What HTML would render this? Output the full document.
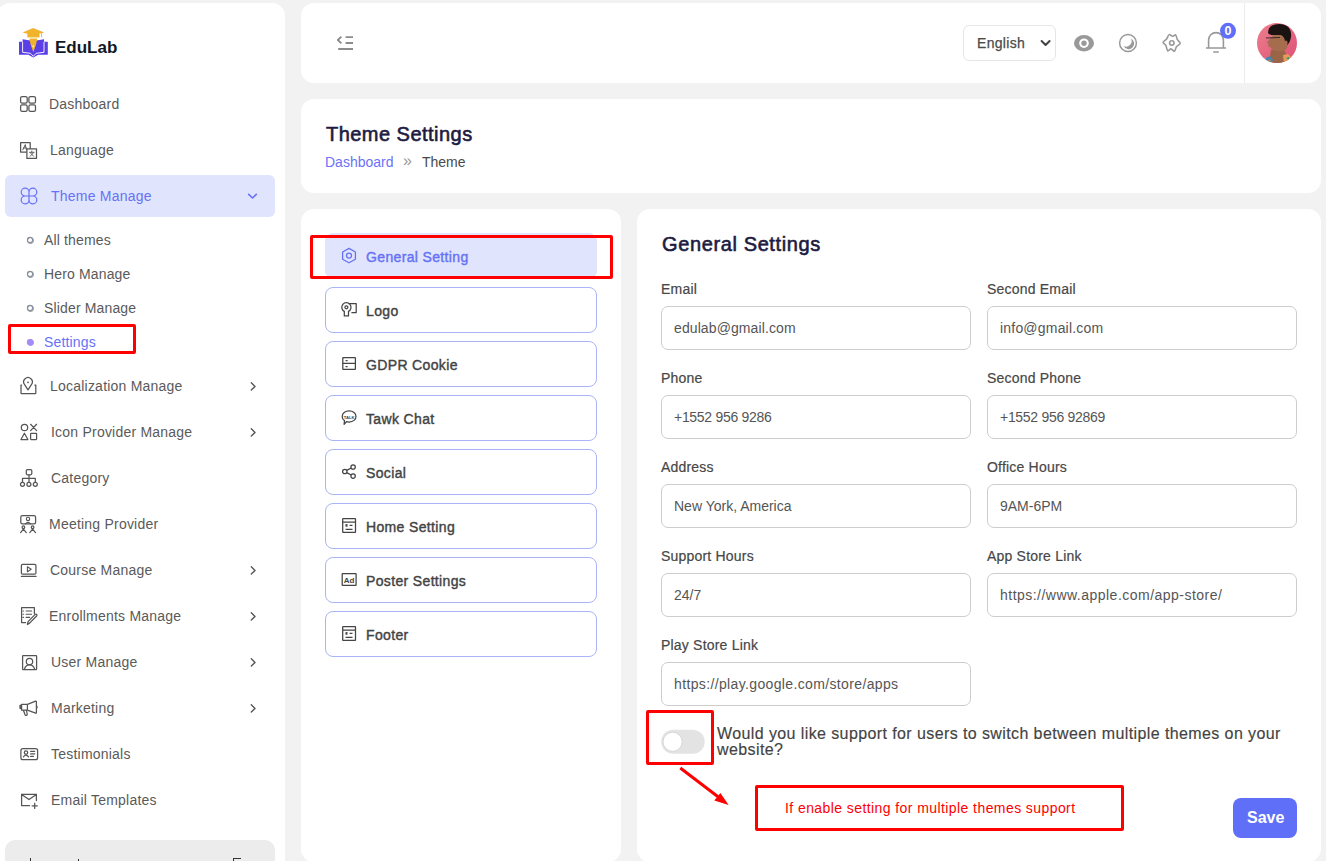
<!DOCTYPE html>
<html><head><meta charset="utf-8">
<style>
*{margin:0;padding:0;box-sizing:border-box}
html,body{width:1326px;height:861px;overflow:hidden;background:#f2f2f2;font-family:"Liberation Sans",sans-serif;color:#555}
.card{position:absolute;background:#fff;border-radius:13px}
.abs{position:absolute;white-space:nowrap}
svg{position:absolute;overflow:visible}
.nav{position:absolute;font-size:14px;line-height:20px;color:#5a5a5a;letter-spacing:0.22px;white-space:nowrap}
.chev{position:absolute;left:249px;width:7px;height:7px;border-right:1.5px solid #555;border-top:1.5px solid #555;transform:rotate(45deg)}
.sub{position:absolute;left:44px;font-size:14px;line-height:20px;color:#5a5a5a;letter-spacing:0.15px;white-space:nowrap}
.dot{position:absolute;left:27px;width:7px;height:7px;border:1.3px solid #8a8f99;border-radius:50%}
.tab{position:absolute;left:325px;width:272px;height:46px;border:1px solid #aab4f6;border-radius:8px}
.tab span{position:absolute;left:40px;top:13px;font-size:14px;line-height:20px;color:#434343;-webkit-text-stroke:0.4px currentColor;letter-spacing:0.35px;white-space:nowrap}
.lbl{position:absolute;font-size:14px;line-height:20px;color:#474747;-webkit-text-stroke:0.2px currentColor;letter-spacing:0.2px;white-space:nowrap}
.inp{position:absolute;width:310px;height:44px;border:1px solid #cdcdcd;border-radius:7px}
.inp span{position:absolute;left:12px;top:11px;font-size:14px;line-height:20px;color:#555;white-space:nowrap}
.redbox{position:absolute;border:3px solid #f00;border-radius:2px}
</style></head><body>

<!-- SIDEBAR -->
<div class="card" style="left:-3px;top:3px;width:288px;height:900px"></div>
<div class="abs" style="left:55px;top:35.5px;font-size:17px;line-height:24px;font-weight:bold;color:#111827">EduLab</div>

<div class="nav" style="left:49px;top:94px">Dashboard</div>
<div class="nav" style="left:50px;top:140px">Language</div>
<div style="position:absolute;left:5px;top:175px;width:270px;height:42px;background:#e0e4fc;border-radius:6px"></div>
<div class="nav" style="left:51px;top:186px;color:#6672f5">Theme Manage</div>
<div class="sub" style="top:230px">All themes</div><div class="dot" style="top:237px"></div>
<div class="sub" style="top:264px">Hero Manage</div><div class="dot" style="top:271px"></div>
<div class="sub" style="top:298px">Slider Manage</div><div class="dot" style="top:305px"></div>
<div class="sub" style="top:332px;color:#6672f5">Settings</div><div class="dot" style="top:339px;background:#a48cf5;border-color:#a48cf5"></div>
<div class="redbox" style="left:8px;top:324px;width:128px;height:30px"></div>
<div class="nav" style="left:50px;top:376px">Localization Manage</div>
<div class="nav" style="left:51px;top:422px">Icon Provider Manage</div>
<div class="nav" style="left:51px;top:468px">Category</div>
<div class="nav" style="left:49px;top:514px">Meeting Provider</div>
<div class="nav" style="left:50px;top:560px">Course Manage</div>
<div class="nav" style="left:49px;top:606px">Enrollments Manage</div>
<div class="nav" style="left:51px;top:652px">User Manage</div>
<div class="nav" style="left:51px;top:698px">Marketing</div>
<div class="nav" style="left:51px;top:744px">Testimonials</div>
<div class="nav" style="left:51px;top:790px">Email Templates</div>
<div style="position:absolute;left:5px;top:840px;width:270px;height:40px;background:#ececec;border-radius:10px"></div>

<div style="position:absolute;left:30px;top:857.5px;width:1.4px;height:4px;background:#333"></div>
<div style="position:absolute;left:77.6px;top:859px;width:1.4px;height:2px;background:#333"></div>
<div style="position:absolute;left:233px;top:858px;width:8px;height:1.3px;background:#333"></div>
<div style="position:absolute;left:233px;top:858px;width:1.3px;height:3px;background:#333"></div>
<!-- HEADER -->
<div class="card" style="left:301px;top:3px;width:1020px;height:80px"></div>
<div style="position:absolute;left:963px;top:25px;width:93px;height:36px;border:1px solid #e6e6e6;border-radius:6px"></div>
<div class="abs" style="left:977px;top:33px;font-size:14px;line-height:20px;color:#4a4a4a;-webkit-text-stroke:0.25px currentColor;letter-spacing:0.3px">English</div>
<div style="position:absolute;left:1244px;top:3px;width:1px;height:80px;background:#ececec"></div>

<!-- BREADCRUMB -->
<div class="card" style="left:301px;top:99px;width:1020px;height:94px"></div>
<div class="abs" style="left:326px;top:121.5px;font-size:20px;line-height:24px;color:#1d1b41;-webkit-text-stroke:0.6px currentColor;letter-spacing:0.47px">Theme Settings</div>
<div class="abs" style="left:325px;top:152px;font-size:14px;line-height:20px;color:#6b72f7">Dashboard</div>
<div class="abs" style="left:403px;top:151px;font-size:16px;line-height:20px;color:#999">&raquo;</div>
<div class="abs" style="left:422px;top:152px;font-size:14px;line-height:20px;color:#4a4a4a">Theme</div>

<!-- TABS -->
<div class="card" style="left:301px;top:209px;width:320px;height:653px"></div>
<div class="tab" style="top:233px;background:#e0e4fc;border-color:#e0e4fc"><span style="color:#6672f5">General Setting</span></div>
<div class="redbox" style="left:310px;top:235px;width:303px;height:44px"></div>
<div class="tab" style="top:287px"><span>Logo</span></div>
<div class="tab" style="top:341px"><span>GDPR Cookie</span></div>
<div class="tab" style="top:395px"><span>Tawk Chat</span></div>
<div class="tab" style="top:449px"><span>Social</span></div>
<div class="tab" style="top:503px"><span>Home Setting</span></div>
<div class="tab" style="top:557px"><span>Poster Settings</span></div>
<div class="tab" style="top:611px"><span>Footer</span></div>

<!-- FORM -->
<div class="card" style="left:637px;top:209px;width:684px;height:653px"></div>
<div class="abs" style="left:662px;top:232px;font-size:20px;line-height:24px;color:#1d1b41;-webkit-text-stroke:0.6px currentColor;letter-spacing:0.62px">General Settings</div>

<div class="lbl" style="left:661px;top:279px">Email</div>
<div class="inp" style="left:661px;top:306px"><span style="letter-spacing:0.1px">edulab@gmail.com</span></div>
<div class="lbl" style="left:987px;top:279px">Second Email</div>
<div class="inp" style="left:987px;top:306px"><span style="letter-spacing:0.2px">info@gmail.com</span></div>

<div class="lbl" style="left:661px;top:368px">Phone</div>
<div class="inp" style="left:661px;top:395px"><span style="letter-spacing:-0.3px">+1552 956 9286</span></div>
<div class="lbl" style="left:987px;top:368px">Second Phone</div>
<div class="inp" style="left:987px;top:395px"><span style="letter-spacing:-0.3px">+1552 956 92869</span></div>

<div class="lbl" style="left:661px;top:457px">Address</div>
<div class="inp" style="left:661px;top:484px"><span>New York, America</span></div>
<div class="lbl" style="left:987px;top:457px">Office Hours</div>
<div class="inp" style="left:987px;top:484px"><span>9AM-6PM</span></div>

<div class="lbl" style="left:661px;top:546px">Support Hours</div>
<div class="inp" style="left:661px;top:573px"><span>24/7</span></div>
<div class="lbl" style="left:987px;top:546px">App Store Link</div>
<div class="inp" style="left:987px;top:573px"><span style="letter-spacing:0.48px">https://www.apple.com/app-store/</span></div>

<div class="lbl" style="left:661px;top:635px">Play Store Link</div>
<div class="inp" style="left:661px;top:662px"><span style="letter-spacing:0.36px">https://play.google.com/store/apps</span></div>

<div class="redbox" style="left:646px;top:710px;width:68px;height:55px"></div>
<div class="abs" style="left:717px;top:726px;font-size:16px;line-height:16px;color:#434343;letter-spacing:0.4px;-webkit-text-stroke:0.15px currentColor">Would you like support for users to switch between multiple themes on your<br>website?</div>

<div class="redbox" style="left:755px;top:785px;width:369px;height:46px"></div>
<div class="abs" style="left:785px;top:799px;font-size:14px;line-height:18px;color:#f00;letter-spacing:0.42px">If enable setting for multiple themes support</div>

<div style="position:absolute;left:1233px;top:798px;width:64px;height:40px;background:#5f6ff8;border-radius:8px"></div>
<div class="abs" style="left:1247px;top:808px;font-size:16px;line-height:20px;font-weight:bold;color:#fff">Save</div>


<svg width="1326" height="861" style="left:0;top:0" viewBox="0 0 1326 861">
<!-- logo -->
<g>
<path d="M19,41.8 H22.6 V39.2 L30.2,40.4 L33.3,47 L36.4,40.4 L44,39.2 V41.8 H47.8 V54.8 H38.2 L33.3,57.6 L28.4,54.8 H19 Z" fill="#5a3ee6"/>
<path d="M22.6,41.8 V52.3 L30.5,53.3 L33.3,56.3 M44,41.8 V52.3 L36.1,53.3 L33.3,56.3" fill="none" stroke="#fff" stroke-width="0.9"/>
<path d="M29.4,38.4 H37.3 L36,44.5 L33.3,52.2 L30.6,44.5 Z" fill="#f0b32b"/>
<circle cx="33.3" cy="46.3" r="0.9" fill="#fff"/>
<path d="M22.6,32.6 L33.2,27.9 L44.2,32.6 L33.2,35.2 Z" fill="#f0b32b"/>
<path d="M27.3,33.5 H39.5 V37.4 H27.3 Z" fill="#f0b32b"/>
<path d="M41.6,33 V37.3" stroke="#f0b32b" stroke-width="0.9"/>
</g>
<!-- sidebar icons -->
<g fill="none" stroke="#555" stroke-width="1.25" stroke-linecap="round" stroke-linejoin="round">
<rect x="20.6" y="96.5" width="6.6" height="6.6" rx="1.6"/><rect x="28.9" y="96.5" width="6.6" height="6.6" rx="1.6"/>
<rect x="20.6" y="104.8" width="6.6" height="6.6" rx="1.6"/><rect x="28.9" y="104.8" width="6.6" height="6.6" rx="1.6"/>
<rect x="20.6" y="142.7" width="9.6" height="9.3"/>
<rect x="26.9" y="148.8" width="9.6" height="9.6" fill="#fff"/>
<path d="M22.8,149.8 L25.3,144.6 L26.5,149.8 M23.8,148 H26" stroke-width="1"/>
<path d="M29.6,152.3 H34 M31.8,151 V152.3 M30.2,156.3 L33.6,152.6 M30.2,152.6 L33.6,156.3" stroke-width="0.9"/>
<path d="M21.6,385 H21 V393 a0.6,0.6 0 0 0 0.6,0.6 H35.2 a0.6,0.6 0 0 0 0.6,-0.6 V385 H34.8"/>
<path d="M28,389.8 L24.6,384.6 A4.3,4.3 0 1 1 31.4,384.6 Z"/>
<circle cx="28" cy="382.3" r="0.9" fill="#555" stroke="none"/>
<circle cx="24.5" cy="427.5" r="3.2"/>
<path d="M30.6,424.3 L36.6,430.6 M36.6,424.3 L30.6,430.6"/>
<path d="M21,439.5 L24.4,433.2 L27.9,439.5 Z"/>
<rect x="30.6" y="433.3" width="6" height="6.2" rx="0.5"/>
<rect x="26.3" y="469.5" width="5.5" height="5.3" rx="1.2"/>
<path d="M29,474.8 V482.2 M22.5,482.2 V478.4 H35.3 V482.2"/>
<circle cx="22.5" cy="484.3" r="2"/><circle cx="28.9" cy="484.3" r="2"/><circle cx="35.3" cy="484.3" r="2"/>
<rect x="20.8" y="515.6" width="14.8" height="8.3" rx="1.6"/>
<circle cx="28" cy="518.9" r="1.7" stroke-width="1.1"/>
<path d="M25.6,523.8 Q28,520.8 30.5,523.8"/>
<circle cx="23.4" cy="527.2" r="1.3"/><circle cx="32.6" cy="527.2" r="1.3"/>
<path d="M20.6,532.6 L23.4,529.2 L26.3,532.6 M29.8,532.6 L32.6,529.2 L35.5,532.6"/>
<rect x="21.4" y="564.4" width="14.5" height="9.7" rx="1.2"/>
<path d="M21.4,576.4 H36"/>
<path d="M27.4,566.7 L31.2,569.3 L27.4,571.8 Z" stroke-width="1.1"/>
<path d="M34.4,613.5 V607.6 H21.6 V622.5 H25.6"/>
<path d="M23,611 H23.6 M26.1,611 H31.6 M23,614.2 H23.6 M26.1,614.2 H31.6 M23,617.4 H23.6 M26.1,617.4 H29.6" stroke-width="1.1"/>
<path d="M27.4,624.4 L28.1,621.6 L35.2,614.4 Q36,613.8 36.7,614.5 Q37.3,615.2 36.6,616 L29.6,623.1 Z"/>
<rect x="22.6" y="655.5" width="14" height="14" rx="0.6"/>
<circle cx="29.5" cy="661.5" r="3.2"/>
<path d="M24.4,669.2 Q25.5,664.8 29.5,664.8 Q33.5,664.8 34.7,669.2"/>
<path d="M20.4,705.2 V708.6 M21.6,704.4 H27.4 L35.6,701.2 Q36.4,701 36.4,701.8 V712.6 Q36.4,713.4 35.6,713.1 L27.4,710.2 H21.6 Z M27.4,704.4 V710.2 M23.4,710.2 L25.1,714.8 Q25.6,715.6 26.5,715.3 Q27.4,715 27.2,714 L26.4,710.2 M36.6,706 Q37.8,707.2 36.6,708.4"/>
<rect x="19.5" y="705" width="1.6" height="3.8" fill="#555" stroke="none"/>
<rect x="20.9" y="748.5" width="16.7" height="11.2" rx="2"/>
<circle cx="26" cy="752.6" r="1.7"/>
<path d="M23.4,756.8 Q25.9,753.3 28.6,756.8"/>
<path d="M30.6,751.3 H34.7 M30.6,753.9 H34.7 M30.6,756.4 H33.4"/>
<path d="M36.4,800.6 V794.4 H21.6 V805.5 H29.5 M21.6,794.4 L29,799.6 L36.4,794.4 M34.7,803.2 V808.4 M32.1,805.8 H37.3"/>
</g>
<!-- theme manage icon -->
<g fill="none" stroke="#6672f5" stroke-width="1.2">
<path d="M29,192 A3.9,3.9 0 1 0 25,196 M29,192 A3.9,3.9 0 1 1 33,196 M29,200 A3.9,3.9 0 1 1 25,196 M29,200 A3.9,3.9 0 1 0 33,196 M29,190.2 V201.8 M23.1,196 H34.9"/>
</g>
<path d="M248.7,194.4 L252.5,198 L256.3,194.4" fill="none" stroke="#6672f5" stroke-width="1.6" stroke-linecap="round" stroke-linejoin="round"/>
<!-- chevrons -->
<g fill="none" stroke="#555" stroke-width="1.4" stroke-linecap="round" stroke-linejoin="round">
<path d="M251.3,382.8 L255,386.4 L251.3,390.0"/>
<path d="M251.3,428.8 L255,432.4 L251.3,436.0"/>
<path d="M251.3,566.8 L255,570.4 L251.3,574.0"/>
<path d="M251.3,612.8 L255,616.4 L251.3,620.0"/>
<path d="M251.3,658.8 L255,662.4 L251.3,666.0"/>
<path d="M251.3,704.8 L255,708.4 L251.3,712.0"/>
</g>
<!-- sub dots -->
<g fill="none" stroke="#8a919b" stroke-width="1.1">
<circle cx="30" cy="240" r="2.6"/><circle cx="30" cy="274" r="2.6"/><circle cx="30" cy="308" r="2.6"/>
</g>
<circle cx="30" cy="342" r="3.1" fill="#a48cf5"/>
<!-- header icons -->
<g fill="none" stroke="#8c8c8c" stroke-width="1.8" stroke-linecap="butt" stroke-linejoin="round">
<path d="M341.4,36.6 L337.8,40 L341.4,43.4"/>
<path d="M345.6,37.1 H353 M345.6,43 H353 M338.2,49 H353"/>
</g>
<path d="M1041.6,41 L1045.6,45 L1049.6,41" fill="none" stroke="#444" stroke-width="2" stroke-linecap="round" stroke-linejoin="round"/>
<ellipse cx="1084" cy="43.2" rx="10" ry="8.2" fill="#999"/>
<circle cx="1084" cy="43.2" r="4.8" fill="#fff"/>
<circle cx="1084" cy="43.2" r="2.7" fill="#999"/>
<circle cx="1128" cy="43" r="8.4" fill="none" stroke="#999" stroke-width="1.5"/>
<path d="M1131.04,38.56 A5.6,5.6 0 1 1 1123.56,46.04 A5.6,5.6 0 0 0 1131.04,38.56 Z" fill="#999"/>
<g fill="none" stroke="#999" stroke-width="1.6" stroke-linejoin="round">
<path d="M1169.20,34.60 C1170.22,34.12 1171.43,36.25 1172.50,36.30 C1173.57,36.35 1174.78,34.33 1175.60,34.90 C1176.42,35.47 1176.63,38.30 1177.40,39.70 C1178.17,41.10 1180.33,42.15 1180.20,43.30 C1180.07,44.45 1177.58,45.28 1176.60,46.60 C1175.62,47.92 1175.23,50.82 1174.30,51.20 C1173.37,51.58 1172.10,48.97 1171.00,48.90 C1169.90,48.83 1168.55,51.35 1167.70,50.80 C1166.85,50.25 1166.67,47.03 1165.90,45.60 C1165.13,44.17 1163.02,43.27 1163.10,42.20 C1163.18,41.13 1165.38,40.47 1166.40,39.20 C1167.42,37.93 1168.18,35.08 1169.20,34.60 Z"/>
<circle cx="1171.8" cy="43" r="2.2"/>
<path d="M1208.6,48 V40 A7.4,7.4 0 0 1 1223.4,40 V48 M1206,48 H1226 M1213.2,52 H1218.8"/>
</g>
<circle cx="1228" cy="30.8" r="8" fill="#5f6ff8"/>
<text x="1228" y="35.3" font-size="12.5" font-weight="bold" fill="#fff" text-anchor="middle" font-family="Liberation Sans">0</text>
<!-- avatar -->
<defs><clipPath id="av"><circle cx="1277" cy="43" r="20"/></clipPath>
<linearGradient id="avg" x1="0" y1="0" x2="1" y2="1"><stop offset="0" stop-color="#ec7e8d"/><stop offset="1" stop-color="#de5276"/></linearGradient></defs>
<g clip-path="url(#av)">
<rect x="1257" y="23" width="40" height="40" fill="url(#avg)"/>
<path d="M1271,50 L1283,47 L1287,56 L1290,64 L1266,64 L1270,56 Z" fill="#9a6447"/>
<path d="M1264,64 L1266,58 L1270,56 L1273,60 L1271,64 Z" fill="#3d8bb0"/>
<path d="M1283,55 L1288,54 L1292,58 L1293,64 L1284,64 Z" fill="#e39a5a"/>
<path d="M1267,63 L1269,59 L1271,61 Z" fill="#f07a30"/>
<path d="M1286,58 L1289,57 L1290,61 Z" fill="#3c9b6a"/>
<path d="M1274,34 L1284,34 Q1289,37 1288,44 Q1288,49 1283,51 L1277,51 Q1272,50 1270,47 L1268,46 L1268.5,44 L1266.8,42.5 L1270,39 Z" fill="#a56c4e"/>
<path d="M1268,33 Q1268,26 1275,24.5 Q1282,23 1287,26 Q1292,30 1291,37 Q1290,43 1287,45 L1285,42 Q1285,37 1281,35 L1274,35 Q1270,35.5 1268,33 Z" fill="#1b1212"/>
<path d="M1266,38 L1280,37.5" stroke="#2c2020" stroke-width="0.9"/>
<ellipse cx="1286" cy="43" rx="1.6" ry="2.4" fill="#a56c4e"/>
</g>
<!-- tab icons -->
<g fill="none" stroke="#6672f5" stroke-width="1.3" stroke-linejoin="round">
<path d="M349,248.4 L355.4,252 V259.2 L349,262.8 L342.6,259.2 V252 Z"/>
<circle cx="349" cy="255.6" r="2.5"/>
</g>
<g fill="none" stroke="#444" stroke-width="1.25" stroke-linejoin="round">
<path d="M344.3,315.9 V311.4 A4.6,4.6 0 1 1 348.5,311.4 V315.9 Z"/>
<circle cx="346.4" cy="307.3" r="1.5"/>
<path d="M348.6,303.6 H356.2 V312.5 H351.4"/>
<rect x="342.8" y="357.6" width="12.6" height="11.8" rx="0.4"/>
<path d="M342.8,363.4 H355.4 M345.6,360.5 H347.6 M345.6,366.5 H347.6"/>
<path d="M349.1,410.9 C353.1,410.9 356,413.4 356,416.4 C356,419.5 353.1,422 349.1,422 C348.2,422 347.3,421.9 346.5,421.6 L344.1,424.4 L344.5,420.6 C342.9,419.6 342.2,418.1 342.2,416.4 C342.2,413.4 345.1,410.9 349.1,410.9 Z"/>
<circle cx="353.1" cy="467" r="2.2"/><circle cx="344.8" cy="471.5" r="2.2"/><circle cx="353.1" cy="476.1" r="2.2"/>
<path d="M346.7,470.4 L351.2,468 M346.7,472.6 L351.2,475"/>
<rect x="342.7" y="518.5" width="12.8" height="13.8" rx="0.4"/>
<path d="M342.7,522 H355.4 M345.6,529.4 H352.5 M349.6,525.3 H352.5"/>
<rect x="342.2" y="573.6" width="13.9" height="11.7" rx="0.4"/>
<rect x="342.7" y="626.5" width="12.8" height="13.8" rx="0.4"/>
<path d="M342.7,630 H355.4 M345.6,637.4 H352.5 M349.6,633.3 H352.5"/>
</g>
<rect x="345.5" y="524.1" width="2" height="2.6" fill="#444"/>
<rect x="345.5" y="632.1" width="2" height="2.6" fill="#444"/>
<text x="349.1" y="418.5" font-size="4.2" font-weight="bold" fill="#444" text-anchor="middle" font-family="Liberation Sans">TALK</text>
<text x="349.1" y="583" font-size="8" font-weight="bold" fill="#444" text-anchor="middle" font-family="Liberation Sans">Ad</text>
<!-- toggle -->
<rect x="661.2" y="729.8" width="43.5" height="24" rx="12" fill="#e3e3e3"/>
<circle cx="672.6" cy="741.8" r="9.6" fill="#fff" stroke="#d4d6da" stroke-width="1"/>
<!-- arrow -->
<path d="M680.3,768 L719,797.5" stroke="#f00" stroke-width="3"/>
<path d="M728.6,805.1 L714.3,800.4 L720.4,792.9 Z" fill="#f00"/>
</svg>

</body></html>
